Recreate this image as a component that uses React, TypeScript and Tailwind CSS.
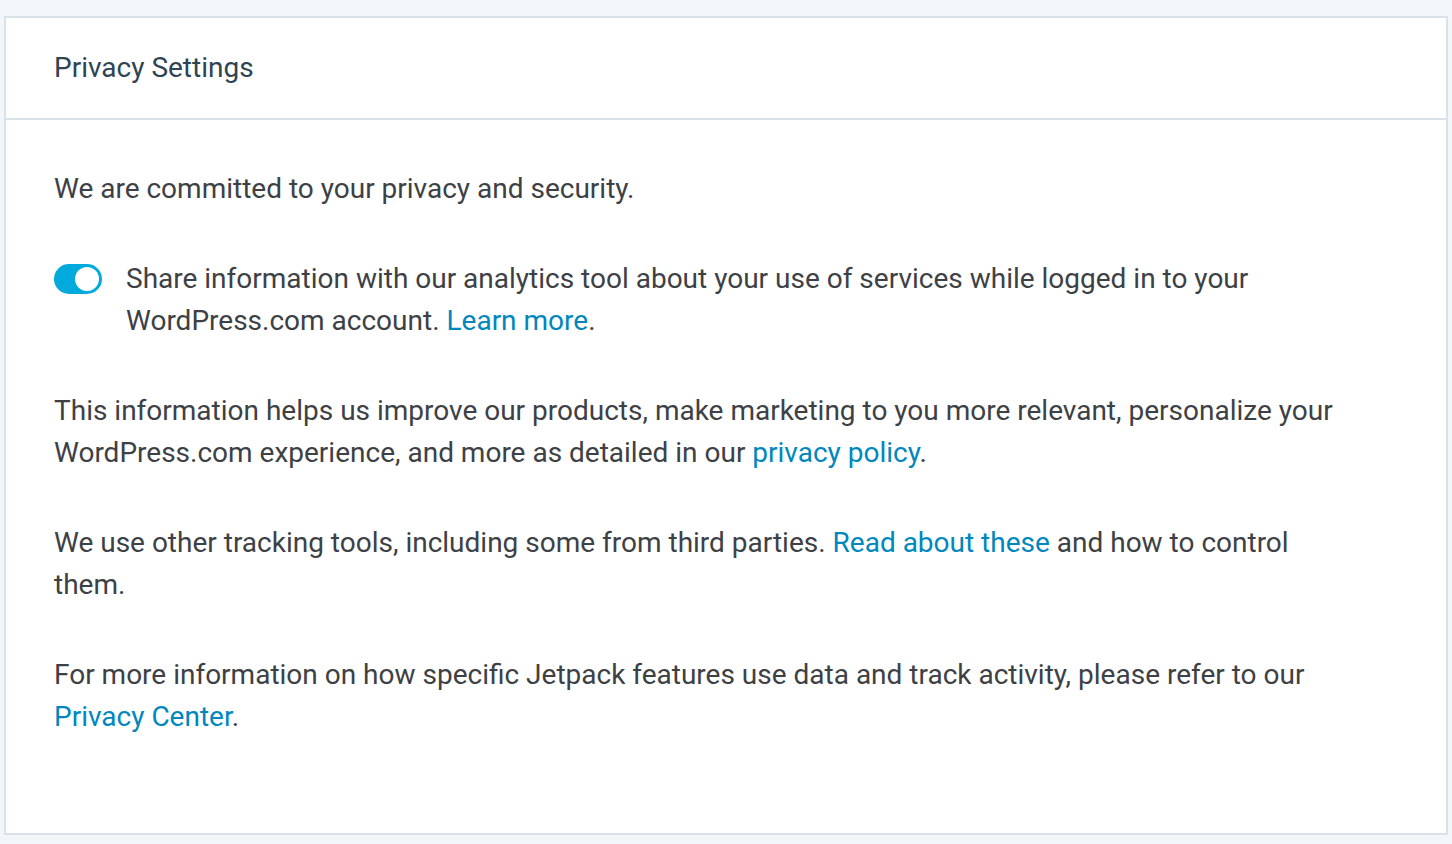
import React, { useState } from 'react'

function Toggle({ checked, onChange }: { checked: boolean, onChange: () => void }) {
    return (
        <button
            onClick={onChange}
            className={`relative mt-[6px] h-[30px] w-[48px] shrink-0 rounded-full transition ${checked ? 'bg-[#00aadc]' : 'bg-[#c8d7e1]'}`}
        >
            <span
                className={`absolute top-[3px] h-[24px] w-[24px] rounded-full bg-white transition-all ${checked ? 'left-[21px]' : 'left-[3px]'}`}
            />
        </button>
    )
}

export default function App() {
    const [shareAnalytics, setShareAnalytics] = useState(true)

    return (
        <div className="min-h-screen bg-[#f3f6f8] px-[4px] pt-[16px] font-['Roboto',sans-serif]">
            <div className="border-2 border-[#d8e2e9] bg-white">
                {/* Header */}
                <div className="flex h-[102px] items-center border-b-2 border-[#d8e2e9] px-[48px]">
                    <h2 className="text-[28px] text-[#2e4453]">Privacy Settings</h2>
                </div>

                <div className="flex max-w-[1396px] flex-col gap-[48px] px-[48px] pb-[95px] pt-[48px] text-[28px] leading-[42px] text-[#3d4145]">
                    <p>We are committed to your privacy and security.</p>

                    <div className="flex gap-[24px]">
                        <Toggle checked={shareAnalytics} onChange={() => setShareAnalytics(v => !v)} />
                        <p>
                            Share information with our analytics tool about your use of services while logged in to your WordPress.com account.{' '}
                            <a href="#" className="text-[#0087be]">Learn more</a>.
                        </p>
                    </div>

                    <p>
                        This information helps us improve our products, make marketing to you more relevant, personalize your WordPress.com experience, and more as detailed in our{' '}
                        <a href="#" className="text-[#0087be]">privacy policy</a>.
                    </p>

                    <p>
                        We use other tracking tools, including some from third parties.{' '}
                        <a href="#" className="text-[#0087be]">Read about these</a> and how to control them.
                    </p>

                    <p>
                        For more information on how specific Jetpack features use data and track activity, please refer to our{' '}
                        <a href="#" className="text-[#0087be]">Privacy Center</a>.
                    </p>
                </div>
            </div>
        </div>
    )
}
